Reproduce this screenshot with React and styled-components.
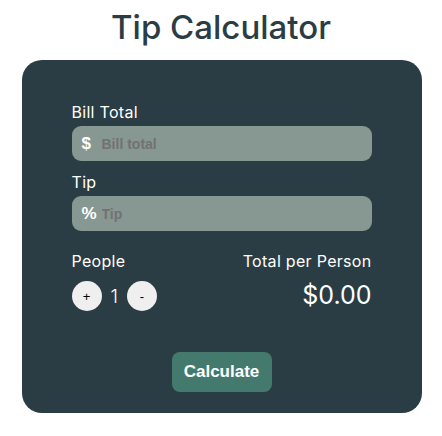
import React, { useState } from "react";
import styled, { createGlobalStyle } from "styled-components";

const GlobalStyle = createGlobalStyle`
  * { box-sizing: border-box; }
  body {
    margin: 0;
    background: #ffffff;
    font-family: Inter, "Open Sans", sans-serif;
  }
`;

const App = () => {
  const [people, setPeople] = useState(1);

  return (
    <Page>
      <GlobalStyle />
      <Title>Tip Calculator</Title>
      <Card>
        <Field>
          <Label>Bill Total</Label>
          <InputBox>
            <Symbol>$</Symbol>
            <Input placeholder="Bill total" />
          </InputBox>
        </Field>
        <Field>
          <Label>Tip</Label>
          <InputBox>
            <Symbol>%</Symbol>
            <Input placeholder="Tip" />
          </InputBox>
        </Field>
        <Bottom>
          <Column>
            <Label>People</Label>
            <Counter>
              <RoundButton onClick={() => setPeople(people + 1)}>+</RoundButton>
              <Count>{people}</Count>
              <RoundButton onClick={() => setPeople(Math.max(1, people - 1))}>-</RoundButton>
            </Counter>
          </Column>
          <Column $right>
            <Label>Total per Person</Label>
            <Total>$0.00</Total>
          </Column>
        </Bottom>
        <ButtonRow>
          <CalcButton>Calculate</CalcButton>
        </ButtonRow>
      </Card>
    </Page>
  );
};

export default App;

const Page = styled.div`
  display: flex;
  flex-direction: column;
  align-items: center;
  padding-top: 6px;
`;

const Title = styled.h1`
  margin: 0 0 12px;
  font-size: 33px;
  font-weight: 500;
  color: #2b3d44;
  line-height: 42px;
`;

const Card = styled.div`
  width: 400px;
  margin-left: 1px;
  background: #2b3d44;
  border-radius: 20px;
  padding: 41px 50px 21px;
  display: flex;
  flex-direction: column;
`;

const Field = styled.div`
  display: flex;
  flex-direction: column;
  margin-bottom: 10px;
`;

const Label = styled.span`
  color: #ffffff;
  font-size: 16px;
  letter-spacing: 0.3px;
  line-height: 22px;
`;

const InputBox = styled.div`
  display: flex;
  align-items: center;
  height: 35px;
  margin-top: 3px;
  padding: 0 10px;
  background: #879791;
  border-radius: 9px;
`;

const Symbol = styled.span`
  color: #ffffff;
  font-family: "Liberation Sans", Arial, sans-serif;
  font-weight: 700;
  font-size: 17px;
  width: 20px;
`;

const Input = styled.input`
  flex: 1;
  border: none;
  padding: 0;
  background: transparent;
  outline: none;
  font-family: "Liberation Sans", Arial, sans-serif;
  font-weight: 700;
  font-size: 14px;
  color: #ffffff;

  &::placeholder {
    color: #727272;
  }
`;

const Bottom = styled.div`
  display: flex;
  justify-content: space-between;
  margin-top: 9px;
`;

const Column = styled.div`
  display: flex;
  flex-direction: column;
  align-items: ${(p) => (p.$right ? "flex-end" : "flex-start")};
  gap: 9px;
`;

const Counter = styled.div`
  display: flex;
  align-items: center;
  gap: 9px;
`;

const RoundButton = styled.button`
  width: 30px;
  height: 30px;
  border-radius: 50%;
  border: none;
  background: #efefef;
  color: #000000;
  font-family: "Liberation Sans", Arial, sans-serif;
  font-size: 13px;
  padding: 0;
  cursor: pointer;
`;

const Count = styled.span`
  color: #ffffff;
  font-size: 19px;
  font-weight: 300;
`;

const Total = styled.span`
  color: #ffffff;
  font-size: 25px;
  line-height: 28px;
`;

const ButtonRow = styled.div`
  display: flex;
  justify-content: center;
  margin-top: 41px;
`;

const CalcButton = styled.button`
  width: 100px;
  height: 40px;
  border: none;
  border-radius: 8px;
  background: #447a6e;
  color: #ffffff;
  font-family: "Liberation Sans", Arial, sans-serif;
  font-weight: 700;
  font-size: 17px;
  cursor: pointer;
`;
